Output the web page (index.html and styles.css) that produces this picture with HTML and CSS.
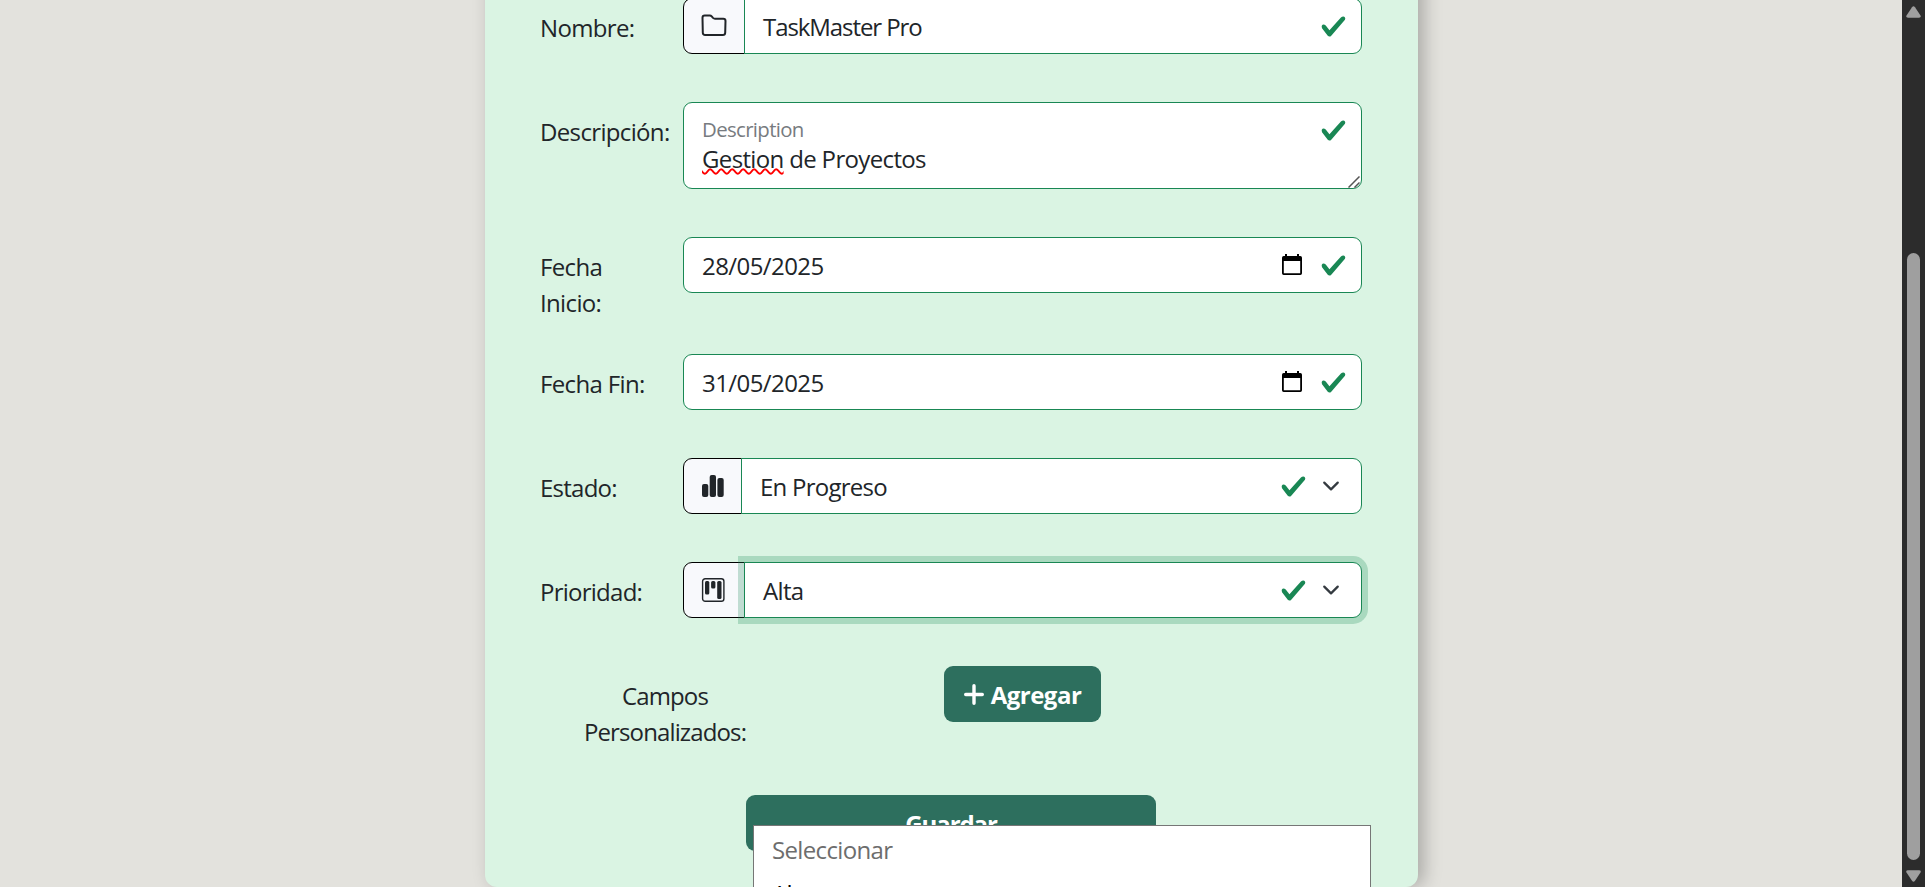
FILE: index.html
```html
<!DOCTYPE html>
<html lang="es">
<head>
<meta charset="utf-8">
<title>Proyecto</title>
<link rel="stylesheet" href="styles.css">
</head>
<body>
<svg class="defs" width="0" height="0">
  <symbol id="check" viewBox="0 0 8 8"><path fill="#198754" d="M2.3 6.73.6 4.53c-.4-1.04.46-1.4 1.1-.8l1.1 1.4 3.4-3.8c.6-.63 1.6-.27 1.2.7l-4 4.6c-.43.5-.8.4-1.1.1z"/></symbol>
  <symbol id="chevron" viewBox="0 0 16 16"><path fill="none" stroke="#343a40" stroke-linecap="round" stroke-linejoin="round" stroke-width="2" d="m2 5 6 6 6-6"/></symbol>
  <symbol id="calendar" viewBox="0 0 20 22"><path fill="#000" fill-rule="evenodd" d="M3 0h2v2h10V0h2v2h1.300q1.700 0 1.700 1.700v15.600q0 1.700-1.700 1.700H1.700Q0 21 0 19.300V3.700Q0 2 1.700 2H3zM1.800 7v12.200h16.400V7z"/></symbol>
</svg>
<main class="page">
  <form class="card">
    <div class="row">
      <label class="label">Nombre:</label>
      <div class="field">
        <span class="addon"><svg width="26" height="24" viewBox="0 0 26 24"><path fill="none" stroke="#212529" stroke-width="2" stroke-linejoin="round" d="M1.500 3.700Q1.500 1.500 3.700 1.500H8.800Q9.900 1.500 10.700 2.400L12 3.900Q12.800 4.700 14 4.700H22.300Q24.500 4.700 24.500 6.900L24.200 18.800Q24.100 21 21.900 21H4.100Q1.900 21 1.800 18.800Z"/></svg></span>
        <span class="value joined project">TaskMaster Pro</span>
        <svg class="check"><use href="#check"/></svg>
      </div>
    </div>
    <div class="row">
      <label class="label">Descripción:</label>
      <div class="field area">
        <div class="value stacked">
          <span class="hint">Description</span>
          <span><span class="typo">Gestion</span> de Proyectos</span>
        </div>
        <svg class="check"><use href="#check"/></svg>
        <svg class="grip" viewBox="0 0 12 12"><path stroke="#555" stroke-width="1.500" d="M.5 11.500 11.500.5M6.500 11.500 11.500 6.500"/></svg>
      </div>
    </div>
    <div class="row">
      <label class="label">Fecha<br>Inicio:</label>
      <div class="field">
        <span class="value date">28/05/2025</span>
        <svg class="calendar"><use href="#calendar"/></svg>
        <svg class="check"><use href="#check"/></svg>
      </div>
    </div>
    <div class="row">
      <label class="label">Fecha Fin:</label>
      <div class="field">
        <span class="value date">31/05/2025</span>
        <svg class="calendar"><use href="#calendar"/></svg>
        <svg class="check"><use href="#check"/></svg>
      </div>
    </div>
    <div class="row">
      <label class="label tight">Estado:</label>
      <div class="field">
        <span class="addon narrow"><svg width="22" height="22" viewBox="0 0 22 22" fill="#212529"><rect x="0" y="9" width="6.300" height="13" rx="2"/><rect x="7.700" y="0" width="6.300" height="22" rx="2"/><rect x="15.400" y="3" width="6.300" height="19" rx="2"/></svg></span>
        <span class="value joined tight">En Progreso</span>
        <svg class="check"><use href="#check"/></svg>
        <svg class="chevron"><use href="#chevron"/></svg>
      </div>
    </div>
    <div class="row">
      <label class="label tight">Prioridad:</label>
      <div class="field">
        <span class="addon"><svg width="24" height="24" viewBox="0 0 24 24"><rect x="1.600" y=".7" width="21.300" height="22.600" rx="2.600" fill="none" stroke="#212529" stroke-width="1.400"/><g fill="#212529"><rect x="4" y="3" width="4.300" height="13.500" rx="1.500"/><rect x="10.100" y="3" width="4.300" height="7.500" rx="1.500"/><rect x="16.200" y="3" width="4.300" height="18" rx="1.500"/></g></svg></span>
        <span class="value joined focused">Alta</span>
        <svg class="check"><use href="#check"/></svg>
        <svg class="chevron"><use href="#chevron"/></svg>
      </div>
    </div>
    <div class="extra">
      <label class="label centered">Campos<br>Personalizados:</label>
      <button class="button add" type="button"><svg width="20" height="21" viewBox="0 0 20 21"><path stroke="#fff" stroke-width="3.400" stroke-linecap="round" d="M10 1.700v17.600M1.700 10.500h16.600"/></svg><span>Agregar</span></button>
    </div>
    <button class="button save" type="button">Guardar</button>
  </form>
</main>
<div class="scrollbar">
  <svg class="arrow" viewBox="0 0 15 12"><path d="M6 1.200Q7.500-.8 9 1.200L14.500 9.500Q15.500 11.700 13 11.700H2Q-.5 11.700.5 9.500Z"/></svg>
  <div class="thumb"></div>
  <svg class="arrow down" viewBox="0 0 15 12"><path d="M6 1.200Q7.500-.8 9 1.200L14.500 9.500Q15.500 11.700 13 11.700H2Q-.5 11.700.5 9.500Z"/></svg>
</div>
<div class="options">
  <div class="option muted">Seleccionar</div>
  <div class="option">Alta</div>
</div>
</body>
</html>
```
FILE: styles.css
```css
* { box-sizing: border-box; }
body {
  margin: 0;
  height: 887px;
  display: flex;
  overflow: hidden;
  background: #e3e2dd;
  color: #212529;
  font: 24px/36px "Open Sans", "Noto Sans", sans-serif;
  letter-spacing: -0.65px;
}
.defs { position: absolute; }
.page { flex: 1; display: flex; justify-content: center; align-items: flex-start; }
.card {
  width: 933px;
  height: 927px;
  margin: -40px 0 0 1px;
  padding: 38px 56px 0 55px;
  border-radius: 12px;
  background: #daf4e3;
  box-shadow: 6px 0 18px rgba(0, 0, 0, 0.25);
}
.row { display: flex; align-items: flex-start; margin-bottom: 24px; }
.label { width: 143px; padding: 11.5px 0 9.5px; white-space: nowrap; }
.field { display: flex; position: relative; width: 679px; height: 56px; margin-bottom: 24px; }
.area { height: 87px; }
.addon {
  width: 62px;
  padding-left: 17px;
  display: flex;
  align-items: center;
  background: #f8f9fc;
  border: 1px solid #000;
  border-radius: 9px 0 0 9px;
}
.narrow { width: 59px; padding-left: 18px; }
.value {
  flex: 1;
  padding: 10px 18px 8px;
  background: #fff;
  border: 1px solid #198754;
  border-radius: 9px;
  white-space: nowrap;
}
.joined { margin-left: -1px; border-radius: 0 9px 9px 0; }
.focused { box-shadow: 0 0 0 6px rgba(25, 135, 84, 0.25); }
.stacked { display: flex; flex-direction: column; }
.tight { letter-spacing: -0.75px; }
.project { letter-spacing: -1.08px; }
.date { letter-spacing: -0.58px; }
.check, .calendar, .chevron, .grip { position: absolute; }
.check { width: 27px; height: 27px; right: 15px; top: 15px; }
.calendar { width: 20px; height: 22px; right: 60px; top: 17px; }
.chevron { width: 18px; height: 18px; right: 22px; top: 19px; }
.field:has(.chevron) .check { right: 55px; }
.grip { width: 12px; height: 12px; right: 2px; bottom: 1px; }
.hint { padding-top: 4px; font-size: 20.4px; line-height: 24px; color: #777b80; }
.typo { text-decoration: underline wavy #f00 1.5px; text-underline-offset: 0; text-decoration-skip-ink: none; }
.extra { display: flex; align-items: flex-start; margin-bottom: 36px; }
.centered { width: 250px; text-align: center; letter-spacing: -0.87px; }
.button {
  height: 56px;
  padding: 2px 0 0;
  border: 0;
  border-radius: 9px;
  background: #2d6f5e;
  color: #fff;
  font: inherit;
  font-weight: 700;
  letter-spacing: -0.5px;
  display: flex;
  align-items: center;
  justify-content: center;
}
.add { width: 157px; margin-left: 154px; gap: 7px; }
.add svg { margin-top: -2px; }
.save { width: 410px; margin: 0 0 0 206px; letter-spacing: -1.1px; }
.scrollbar {
  width: 23px;
  background: #2c2c2c;
  display: flex;
  flex-direction: column;
  align-items: center;
  justify-content: space-between;
  padding: 6px 0 5px;
}
.arrow { width: 15px; height: 12px; fill: #9f9f9f; }
.down { transform: rotate(180deg); }
.thumb { width: 13px; height: 607px; margin-top: 225px; border-radius: 7px; background: #9f9f9f; }
.options {
  position: absolute;
  left: 753px;
  top: 825px;
  width: 618px;
  height: 62px;
  overflow: hidden;
  padding: 2px 18px;
  background: #fff;
  border: 1px solid #767676;
  border-bottom: 0;
}
.option { height: 44px; line-height: 43px; color: #000; }
.muted { color: #6d6d6d; }
```
